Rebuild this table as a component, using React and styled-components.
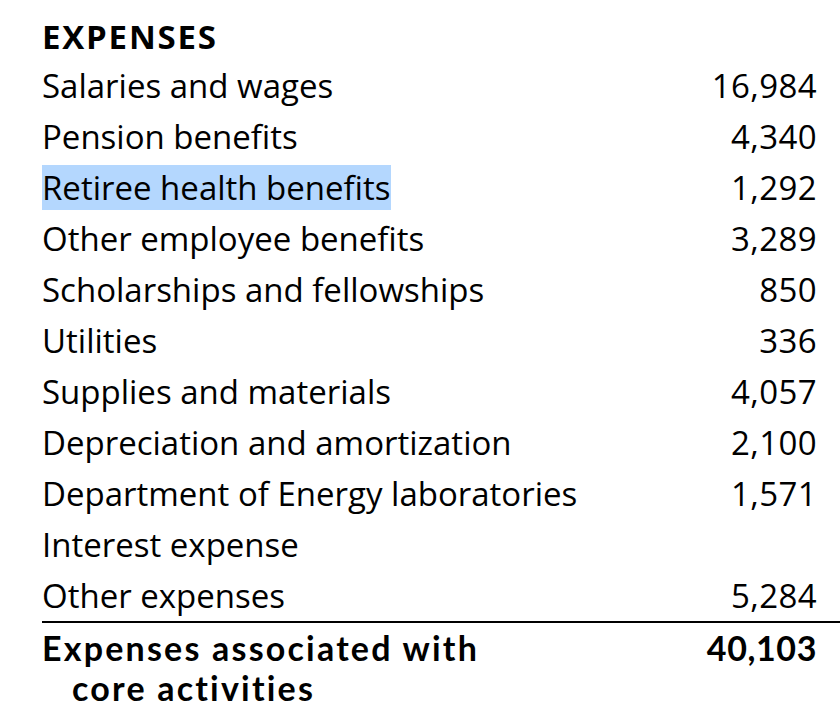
import React from 'react';
import styled, { createGlobalStyle } from 'styled-components';

const GlobalStyle = createGlobalStyle`
  body {
    margin: 0;
    background: #ffffff;
  }
`;

const Sheet = styled.div`
  width: 840px;
  height: 710px;
  padding: 13px 0 0 42px;
  box-sizing: border-box;
  font-family: "Open Sans", "Noto Sans", sans-serif;
  color: #000;
  overflow: hidden;
`;

const Heading = styled.div`
  font-size: 33px;
  font-weight: 700;
  line-height: 47px;
  letter-spacing: 1.8px;
`;

const Row = styled.div`
  display: flex;
  justify-content: space-between;
  align-items: center;
  height: 51px;
  font-size: 33px;
  padding-right: 23px;
  border-bottom: ${props => (props.$rule ? '2px solid #000' : 'none')};
`;

const Label = styled.span`
  background: ${props => (props.$selected ? '#b4d7fe' : 'transparent')};
  line-height: 45px;
`;

const Amount = styled.span`
  letter-spacing: 0.4px;
`;

const TotalRow = styled.div`
  display: flex;
  justify-content: space-between;
  align-items: flex-start;
  padding: 5px 23px 0 0;
  font-family: Lato, "Open Sans", sans-serif;
  font-size: 34px;
  font-weight: 700;
  line-height: 40px;
  letter-spacing: 2.2px;
`;

const TotalLabel = styled.div`
  display: flex;
  flex-direction: column;
  & > span + span {
    padding-left: 30px;
  }
`;

const TotalAmount = styled.span`
  letter-spacing: 0.6px;
`;

const rows = [
  ['Salaries and wages', '16,984'],
  ['Pension benefits', '4,340'],
  ['Retiree health benefits', '1,292', true],
  ['Other employee benefits', '3,289'],
  ['Scholarships and fellowships', '850'],
  ['Utilities', '336'],
  ['Supplies and materials', '4,057'],
  ['Depreciation and amortization', '2,100'],
  ['Department of Energy laboratories', '1,571'],
  ['Interest expense', ''],
  ['Other expenses', '5,284'],
];

export default function App() {
  return (
    <>
      <GlobalStyle />
      <Sheet>
        <Heading>EXPENSES</Heading>
        {rows.map(([label, value, selected], i) => (
          <Row key={label} $rule={i === rows.length - 1}>
            <Label $selected={selected}>{label}</Label>
            <Amount>{value}</Amount>
          </Row>
        ))}
        <TotalRow>
          <TotalLabel>
            <span>Expenses associated with</span>
            <span>core activities</span>
          </TotalLabel>
          <TotalAmount>40,103</TotalAmount>
        </TotalRow>
      </Sheet>
    </>
  );
}
